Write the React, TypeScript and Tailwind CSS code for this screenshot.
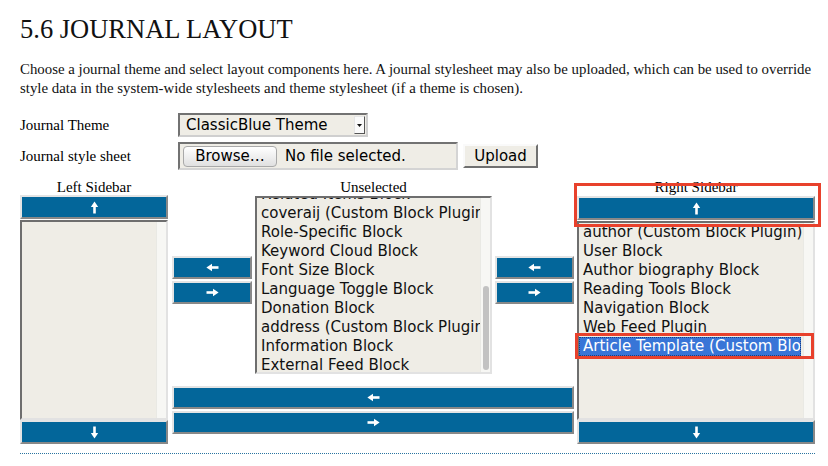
import React from "react";

type Dir = "up" | "down" | "left" | "right";

const rot: Record<Dir, string> = {
  right: "",
  left: "rotate-180",
  up: "-rotate-90",
  down: "rotate-90",
};

function Arrow({ dir }: { dir: Dir }) {
  return (
    <svg width="13" height="9" viewBox="0 0 13 9" className={rot[dir]}>
      <path d="M0.5 3.2 H8 V5.8 H0.5 Z" fill="#ffffff" />
      <path d="M7 0.8 L12.6 4.5 L7 8.2 Z" fill="#ffffff" />
    </svg>
  );
}

function BlueButton({ dir, className = "" }: { dir: Dir; className?: string }) {
  return (
    <div
      className={
        "flex items-center justify-center bg-[#03669a] border-2 border-t-[#e4e4e4] border-l-[#e4e4e4] border-b-[#888888] border-r-[#888888] " +
        className
      }
    >
      <Arrow dir={dir} />
    </div>
  );
}

interface ListBoxProps {
  items: string[];
  selected?: string;
  offset?: string;
  thumb?: boolean;
  className?: string;
}

function ListBox({ items, selected, offset = "", thumb, className = "" }: ListBoxProps) {
  return (
    <div
      className={
        "flex bg-[#efede6] border-2 border-t-[#6e6e6e] border-l-[#6e6e6e] border-b-[#e2e2e2] border-r-[#e2e2e2] overflow-hidden " +
        className
      }
    >
      <div className="flex-1 overflow-hidden">
        <div className={offset}>
          {items.map((item) => (
            <div
              key={item}
              className={
                item === selected
                  ? "mr-[2px] h-[19px] leading-[17px] pl-[3px] whitespace-nowrap overflow-hidden text-white bg-[#3875d7] border border-dotted border-[#1b3f80]"
                  : "h-[19px] leading-[19px] pl-[4px] whitespace-nowrap overflow-hidden text-[#111]"
              }
            >
              {item}
            </div>
          ))}
        </div>
      </div>
      <div className="w-[10px] h-full bg-[#f7f7f4] border-l border-[#e9e9e4] flex justify-center">
        {thumb && <div className="mt-[88px] w-[6px] h-[84px] rounded-full bg-[#c2c2c2]" />}
      </div>
    </div>
  );
}

const unselected = [
  "Related Items Block",
  "coveraij (Custom Block Plugin)",
  "Role-Specific Block",
  "Keyword Cloud Block",
  "Font Size Block",
  "Language Toggle Block",
  "Donation Block",
  "address (Custom Block Plugin)",
  "Information Block",
  "External Feed Block",
];

const rightItems = [
  "author (Custom Block Plugin)",
  "User Block",
  "Author biography Block",
  "Reading Tools Block",
  "Navigation Block",
  "Web Feed Plugin",
  "Article Template (Custom Block Plugin)",
];

export default function App() {
  return (
    <div className="relative w-[828px] h-[466px] overflow-hidden bg-white text-black font-['Liberation_Serif',serif]">
      <div className="pl-[20px] pt-[13px]">
        <h1 className="text-[26.5px] leading-[32px] font-normal text-[#111]">5.6 JOURNAL LAYOUT</h1>
        <p className="mt-[15px] text-[14.85px] leading-[19px] whitespace-nowrap text-[#111]">
          Choose a journal theme and select layout components here. A journal stylesheet may also be uploaded, which can be used to override
          <br />
          style data in the system-wide stylesheets and theme stylesheet (if a theme is chosen).
        </p>

        <div className="mt-[15px] flex items-center h-[24px]">
          <div className="w-[158px] text-[15px]">Journal Theme</div>
          <div className="w-[190px] h-[24px] flex items-center bg-[#efede6] border-2 border-t-[#727272] border-l-[#727272] border-b-[#cfcfcf] border-r-[#cfcfcf] font-['DejaVu_Sans',Verdana,sans-serif] text-[15px]">
            <span className="pl-[6px]">ClassicBlue Theme</span>
            <div className="ml-auto mr-[1px] w-[11px] h-[18px] bg-[#fafafa] border border-t-[#e5e5e5] border-l-[#e5e5e5] border-b-[#555] border-r-[#555] flex items-center justify-center">
              <svg width="5" height="3" viewBox="0 0 5 3">
                <path d="M0 0 H5 L2.5 3 Z" fill="#111" />
              </svg>
            </div>
          </div>
        </div>

        <div className="mt-[5px] flex items-center h-[28px]">
          <div className="w-[158px] text-[15px]">Journal style sheet</div>
          <div className="w-[280px] h-[28px] flex items-center bg-[#efede6] border-2 border-t-[#727272] border-l-[#727272] border-b-[#d4d4d4] border-r-[#d4d4d4] font-['DejaVu_Sans',Verdana,sans-serif] text-[15px]">
            <div className="ml-[3px] w-[94px] h-[21px] rounded-[4px] border border-[#a9a9a9] bg-gradient-to-b from-white to-[#e0e0e0] flex items-center justify-center leading-none">
              Browse…
            </div>
            <span className="ml-[8px]">No file selected.</span>
          </div>
          <div className="ml-[5px] w-[75px] h-[24px] flex items-center justify-center bg-[#efede6] border-2 border-t-[#fafafa] border-l-[#fafafa] border-b-[#707070] border-r-[#707070] font-['DejaVu_Sans',Verdana,sans-serif] text-[15px]">
            Upload
          </div>
        </div>

        <div className="mt-[9px] flex font-['DejaVu_Sans',Verdana,sans-serif] text-[15px]">
          <div className="w-[148px] flex flex-col">
            <div className="h-[16px] leading-[16px] text-center font-['Liberation_Serif',serif] text-[15px]">Left Sidebar</div>
            <BlueButton dir="up" className="h-[24px]" />
            <ListBox items={[]} className="mt-[1px] h-[200px]" />
            <BlueButton dir="down" className="h-[24px]" />
          </div>

          <div className="ml-[4px] w-[402px] flex flex-col">
            <div className="flex">
              <div className="w-[83px]" />
              <div className="w-[237px] h-[16px] leading-[16px] text-center font-['Liberation_Serif',serif] text-[15px]">Unselected</div>
            </div>
            <div className="flex mt-[1px]">
              <div className="w-[80px] pt-[60px] flex flex-col gap-[2px]">
                <BlueButton dir="left" className="h-[23px]" />
                <BlueButton dir="right" className="h-[23px]" />
              </div>
              <ListBox items={unselected} offset="-mt-[13px]" thumb className="ml-[3px] w-[237px] h-[178px]" />
              <div className="ml-[3px] w-[79px] pt-[60px] flex flex-col gap-[2px]">
                <BlueButton dir="left" className="h-[23px]" />
                <BlueButton dir="right" className="h-[23px]" />
              </div>
            </div>
            <BlueButton dir="left" className="mt-[12px] h-[23px]" />
            <BlueButton dir="right" className="mt-[2px] h-[23px]" />
          </div>

          <div className="ml-[3px] w-[238px] flex flex-col">
            <div className="h-[16px] leading-[16px] text-center font-['Liberation_Serif',serif] text-[15px]">Right Sidebar</div>
            <BlueButton dir="up" className="mt-[1px] h-[24px]" />
            <ListBox items={rightItems} selected="Article Template (Custom Block Plugin)" className="mt-[1px] h-[199px]" />
            <BlueButton dir="down" className="h-[24px]" />
          </div>
        </div>

        <div className="mt-[9px] w-[795px] border-t border-dotted border-[#2a74a0]" />
      </div>

      <div className="absolute left-[574px] top-[183px] w-[247px] h-[44px] border-[3px] border-[#e8412c]" />
      <div className="absolute left-[575px] top-[333px] w-[239px] h-[26px] border-[3px] border-[#e8412c]" />
    </div>
  );
}
